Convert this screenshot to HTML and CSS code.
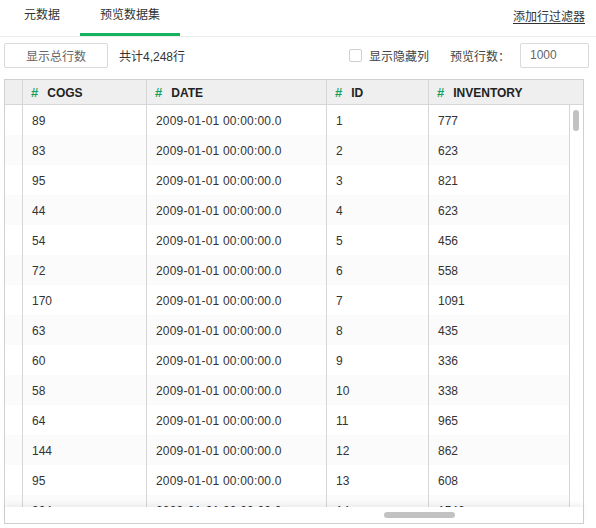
FILE: index.html
```html
<!DOCTYPE html>
<html lang="zh">
<head>
<meta charset="utf-8">
<title>预览数据集</title>
<link rel="stylesheet" href="styles.css">
</head>
<body>
<div class="page">
  <div class="tabs">
    <div class="tab tab-first">元数据</div>
    <div class="tab tab-active">预览数据集</div>
    <a class="filter-link">添加行过滤器</a>
  </div>
  <div class="toolbar">
    <button class="btn">显示总行数</button>
    <span class="total">共计4,248行</span>
    <div class="right">
      <span class="checkbox"></span>
      <span class="label">显示隐藏列</span>
      <span class="label label-rows">预览行数：</span>
      <div class="input">1000</div>
    </div>
  </div>
  <div class="table">
    <div class="thead">
      <div class="c c0"></div>
      <div class="c c1"><span class="hash">#</span>COGS</div>
      <div class="c c2"><span class="hash">#</span>DATE</div>
      <div class="c c3"><span class="hash">#</span>ID</div>
      <div class="c c4 last"><span class="hash">#</span>INVENTORY</div>
      <div class="c cs"></div>
    </div>
    <div class="tmain">
      <div class="tbody">
        <div class="row"><div class="c c0"></div><div class="c c1">89</div><div class="c c2">2009-01-01 00:00:00.0</div><div class="c c3">1</div><div class="c c4">777</div></div>
        <div class="row"><div class="c c0"></div><div class="c c1">83</div><div class="c c2">2009-01-01 00:00:00.0</div><div class="c c3">2</div><div class="c c4">623</div></div>
        <div class="row"><div class="c c0"></div><div class="c c1">95</div><div class="c c2">2009-01-01 00:00:00.0</div><div class="c c3">3</div><div class="c c4">821</div></div>
        <div class="row"><div class="c c0"></div><div class="c c1">44</div><div class="c c2">2009-01-01 00:00:00.0</div><div class="c c3">4</div><div class="c c4">623</div></div>
        <div class="row"><div class="c c0"></div><div class="c c1">54</div><div class="c c2">2009-01-01 00:00:00.0</div><div class="c c3">5</div><div class="c c4">456</div></div>
        <div class="row"><div class="c c0"></div><div class="c c1">72</div><div class="c c2">2009-01-01 00:00:00.0</div><div class="c c3">6</div><div class="c c4">558</div></div>
        <div class="row"><div class="c c0"></div><div class="c c1">170</div><div class="c c2">2009-01-01 00:00:00.0</div><div class="c c3">7</div><div class="c c4">1091</div></div>
        <div class="row"><div class="c c0"></div><div class="c c1">63</div><div class="c c2">2009-01-01 00:00:00.0</div><div class="c c3">8</div><div class="c c4">435</div></div>
        <div class="row"><div class="c c0"></div><div class="c c1">60</div><div class="c c2">2009-01-01 00:00:00.0</div><div class="c c3">9</div><div class="c c4">336</div></div>
        <div class="row"><div class="c c0"></div><div class="c c1">58</div><div class="c c2">2009-01-01 00:00:00.0</div><div class="c c3">10</div><div class="c c4">338</div></div>
        <div class="row"><div class="c c0"></div><div class="c c1">64</div><div class="c c2">2009-01-01 00:00:00.0</div><div class="c c3">11</div><div class="c c4">965</div></div>
        <div class="row"><div class="c c0"></div><div class="c c1">144</div><div class="c c2">2009-01-01 00:00:00.0</div><div class="c c3">12</div><div class="c c4">862</div></div>
        <div class="row"><div class="c c0"></div><div class="c c1">95</div><div class="c c2">2009-01-01 00:00:00.0</div><div class="c c3">13</div><div class="c c4">608</div></div>
        <div class="row"><div class="c c0"></div><div class="c c1">304</div><div class="c c2">2009-01-01 00:00:00.0</div><div class="c c3">14</div><div class="c c4">1546</div></div>
      </div>
      <div class="vscroll"><div class="vthumb"></div></div>
    </div>
    <div class="hscroll"><div class="hthumb"></div></div>
  </div>
</div>
</body>
</html>
```
FILE: styles.css
```css
* { box-sizing: border-box; }
html, body { margin: 0; padding: 0; background: #fff; }
body {
  font-family: "Liberation Sans", "Noto Sans CJK SC", sans-serif;
  font-size: 12px;
  color: #333;
}
.page { width: 596px; }

.tabs {
  display: flex;
  height: 37px;
  border-bottom: 1px solid #ebebeb;
}
.tab {
  height: 36px;
  line-height: 30px;
  text-align: center;
  color: #333;
}
.tab-first { width: 76px; margin-left: 4px; }
.tab-active { width: 100px; border-bottom: 3px solid #13b45c; }
.filter-link {
  margin-left: auto;
  margin-right: 11px;
  line-height: 34px;
  color: #333;
  text-decoration: underline;
  text-underline-offset: 2px;
}

.toolbar {
  display: flex;
  align-items: center;
  height: 42px;
  padding: 6px 7px 11px 4px;
}
.btn {
  width: 104px;
  height: 25px;
  border: 1px solid #d9d9d9;
  border-radius: 2px;
  background: #fff;
  color: #666;
  font-family: inherit;
  font-size: 12px;
  padding: 0;
}
.total { margin-left: 11px; color: #333; }
.right { margin-left: auto; display: flex; align-items: center; }
.checkbox {
  width: 13px;
  height: 13px;
  border: 1px solid #cfcfcf;
  border-radius: 2px;
  background: #fff;
}
.label { color: #444; margin-left: 7px; }
.label-rows { margin-left: 21px; }
.input {
  margin-left: 10px;
  width: 69px;
  height: 25px;
  border: 1px solid #d9d9d9;
  border-radius: 2px;
  line-height: 23px;
  padding-left: 9px;
  color: #666;
}

.table {
  margin-left: 4px;
  width: 580px;
  height: 445px;
  border: 1px solid #d0d0d0;
  display: flex;
  flex-direction: column;
}
.thead {
  display: flex;
  height: 25px;
  background: #efefef;
  border-bottom: 1px solid #d6d6d6;
  font-weight: bold;
  color: #222;
}
.thead .c { line-height: 26px; }
.c {
  flex: none;
  border-right: 1px solid #d6d6d6;
  padding-left: 9px;
  white-space: nowrap;
  overflow: hidden;
}
.c0 { width: 18px; padding: 0; }
.c1 { width: 124px; }
.c2 { width: 180px; letter-spacing: 0.2px; }
.c3 { width: 102px; }
.c4 { width: 140px; border-right: none; }
.cs { width: 14px; border-right: none; }
.thead .c1, .thead .c2, .thead .c3, .thead .c4 { padding-left: 8px; letter-spacing: 0; }
.hash { color: #17a05a; margin-right: 9px; font-size: 13px; }

.tmain { display: flex; height: 402px; }
.tbody { width: 564px; height: 402px; overflow: hidden; }
.row { display: flex; height: 30px; line-height: 32px; color: #333; }
.row:nth-child(even) { background: #fbfbfb; }
.vscroll {
  width: 14px;
  border-left: 1px solid #d6d6d6;
  padding: 5px 0 0 3px;
}
.vthumb { width: 6px; height: 21px; border-radius: 3px; background: #c2c2c2; }

.hscroll {
  height: 16px;
  padding: 5px 0 0 379px;
  background: #fff;
  box-shadow: 0 -3px 5px rgba(0, 0, 0, 0.06);
  position: relative;
}
.hthumb { width: 71px; height: 6px; border-radius: 3px; background: #c2c2c2; }
```
